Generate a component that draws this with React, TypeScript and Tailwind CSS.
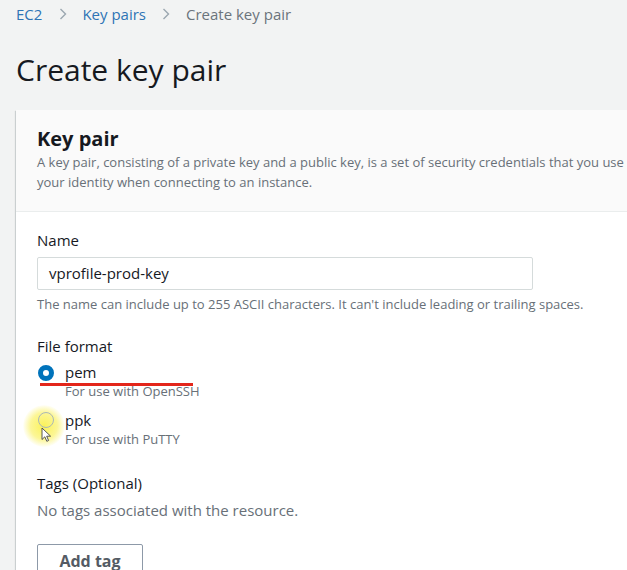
import React from "react";

export default function App() {
  return (
    <div
      className="w-[627px] h-[570px] overflow-hidden bg-[#f2f3f3] relative text-[#16191f]"
      style={{ fontFamily: "'Open Sans', 'Liberation Sans', sans-serif" }}
    >
      <div className="pl-[16px]">
        {/* Breadcrumb */}
        <div className="h-[28px] flex items-center text-[15px] whitespace-nowrap">
          <span className="text-[#2e74b5]">EC2</span>
          <svg className="ml-[17px] mr-[15px]" width="8" height="12" viewBox="0 0 8 12">
            <path d="M1.5 1l5 5-5 5" fill="none" stroke="#9ba7b0" strokeWidth="1.4" />
          </svg>
          <span className="text-[#2e74b5]">Key pairs</span>
          <svg className="ml-[16px] mr-[16px]" width="8" height="12" viewBox="0 0 8 12">
            <path d="M1.5 1l5 5-5 5" fill="none" stroke="#9ba7b0" strokeWidth="1.4" />
          </svg>
          <span className="text-[#6b747c]">Create key pair</span>
        </div>

        {/* Title */}
        <h1 className="mt-[24px] text-[30px] leading-[36px] font-normal text-[#16191f] whitespace-nowrap">
          Create key pair
        </h1>

        {/* Card */}
        <div className="mt-[22px] w-[700px] bg-white shadow-[0_1px_1px_0_rgba(0,28,36,0.25),-1px_1px_1px_0_rgba(0,28,36,0.12)]">
          <div className="bg-[#fafafa] border-b border-[#eaeded] pl-[21px] pt-[17px] pb-[19px]">
            <h2 className="text-[20px] leading-[24px] font-bold text-[#16191f]">Key pair</h2>
            <p className="mt-[1px] text-[13px] leading-[20px] text-[#687078] whitespace-nowrap">
              A key pair, consisting of a private key and a public key, is a set of security credentials that you use
              <br />
              your identity when connecting to an instance.
            </p>
          </div>

          <div className="pl-[21px] pt-[18px] pb-[20px]">
            <div className="text-[15px] leading-[20px] text-[#16191f]">Name</div>
            <div className="mt-[7px] w-[496px] h-[33px] border border-[#d5dbdb] rounded-[2px] flex items-center pl-[11px] text-[15px] text-[#16191f]">
              vprofile-prod-key
            </div>
            <div className="mt-[5px] text-[13px] leading-[18px] text-[#687078] whitespace-nowrap">
              The name can include up to 255 ASCII characters. It can't include leading or trailing spaces.
            </div>

            <div className="mt-[23px] text-[15px] leading-[20px] text-[#16191f]">File format</div>

            {/* pem */}
            <div className="mt-[6px] flex items-start relative">
              <div className="ml-[1px] mt-[3px] w-[16px] h-[16px] rounded-full border-[5px] border-[#0073bb] bg-white shrink-0" />
              <div className="ml-[11px]">
                <div className="text-[15px] leading-[20px] text-[#16191f]">pem</div>
                <div className="text-[13px] leading-[18px] text-[#687078]">For use with OpenSSH</div>
              </div>
              <div className="absolute left-[3px] top-[21px] w-[153px] h-[3px] bg-[#e3261b]" />
            </div>

            {/* ppk */}
            <div className="mt-[10px] flex items-start relative">
              <div className="absolute left-[-14px] top-[-5px] w-[42px] h-[42px] rounded-full bg-[radial-gradient(circle,rgba(250,240,60,0.85)_0%,rgba(250,240,80,0.6)_45%,rgba(250,245,120,0)_72%)]" />
              <div className="relative ml-[1px] mt-[2px] w-[16px] h-[16px] rounded-full border border-[#aab7b8] bg-transparent shrink-0" />
              <div className="relative ml-[11px]">
                <div className="text-[15px] leading-[20px] text-[#16191f]">ppk</div>
                <div className="text-[13px] leading-[18px] text-[#687078]">For use with PuTTY</div>
              </div>
              <svg className="absolute left-[4px] top-[17px]" width="12" height="16" viewBox="0 0 12 16">
                <path d="M1 1 L1 12.5 L3.8 9.8 L5.8 14.3 L7.6 13.5 L5.7 9.2 L9.6 9.2 Z" fill="#ffffff" stroke="#444" strokeWidth="0.9" strokeLinejoin="round" />
              </svg>
            </div>

            <div className="mt-[25px] text-[15px] leading-[20px] text-[#16191f]">Tags (Optional)</div>
            <div className="mt-[7px] text-[15px] leading-[20px] text-[#687078]">No tags associated with the resource.</div>

            <button className="mt-[24px] w-[106px] h-[34px] border border-[#8d99a8] rounded-[2px] bg-white text-[16px] font-bold text-[#545b64] flex items-center justify-center">
              Add tag
            </button>
          </div>
        </div>
      </div>
    </div>
  );
}
